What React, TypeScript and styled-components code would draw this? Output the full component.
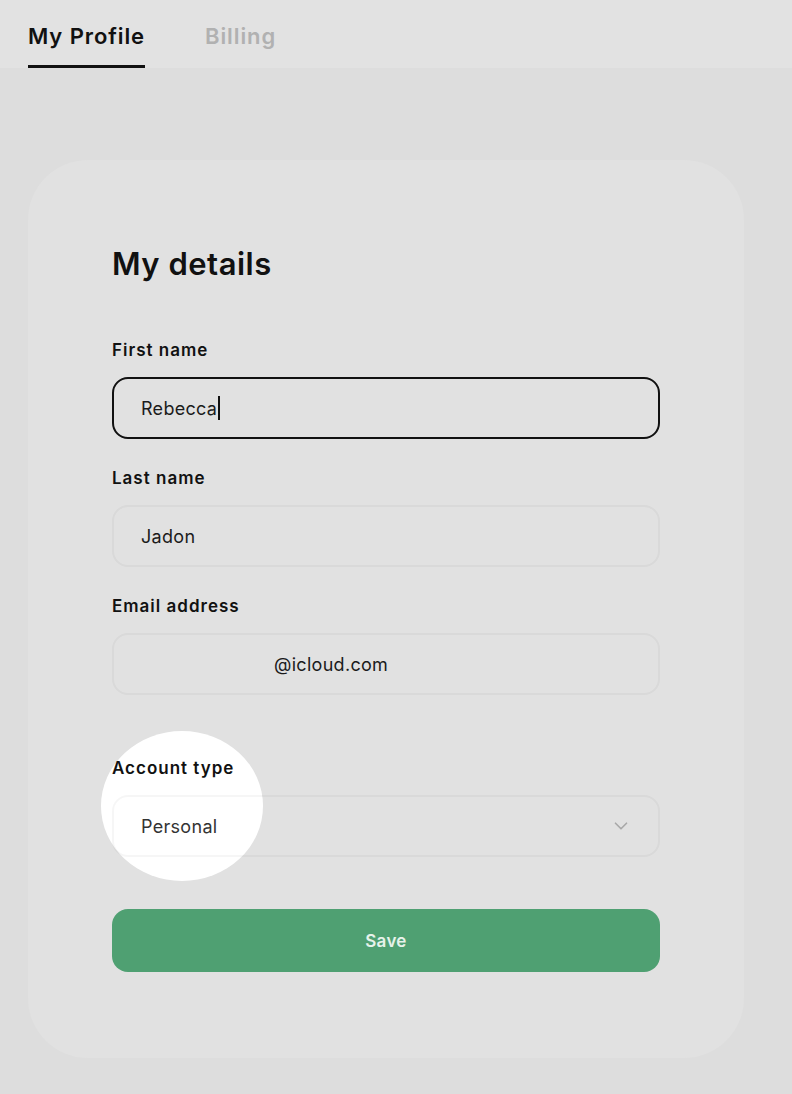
import React from "react";
import styled, { createGlobalStyle } from "styled-components";
import { ChevronDown } from "lucide-react";

const GlobalStyle = createGlobalStyle`
  body {
    margin: 0;
    background: #dddddd;
    font-family: "Inter", "Liberation Sans", sans-serif;
    color: #111;
  }
`;

const Page = styled.div`
  min-height: 1094px;
  background: #dddddd;
`;

const Tabs = styled.div`
  height: 68px;
  background: #e2e2e2;
  display: flex;
  align-items: stretch;
  gap: 60px;
  padding: 0 28px;
`;

const Tab = styled.div<{ $active?: boolean }>`
  display: flex;
  align-items: center;
  font-size: 22px;
  font-weight: 600;
  letter-spacing: 0.9px;
  color: ${(p) => (p.$active ? "#111" : "#b1b1b1")};
  border-bottom: 3px solid ${(p) => (p.$active ? "#111" : "transparent")};
  padding-top: 6px;
`;

const Card = styled.div`
  position: relative;
  margin: 92px 48px 0 28px;
  height: 898px;
  box-sizing: border-box;
  background: #e1e1e1;
  border-radius: 60px;
  padding: 86px 84px 0;
  display: flex;
  flex-direction: column;
`;

const Spotlight = styled.div`
  position: absolute;
  left: 73px;
  top: 571px;
  width: 162px;
  height: 150px;
  border-radius: 50%;
  background: #ffffff;
`;

const Title = styled.h1`
  margin: 0 0 56px;
  font-size: 31px;
  font-weight: 600;
  line-height: 36px;
  letter-spacing: 0.5px;
`;

const Field = styled.div<{ $gap?: number }>`
  position: relative;
  display: flex;
  flex-direction: column;
  gap: 15px;
  margin-bottom: ${(p) => p.$gap ?? 27}px;
`;

const Label = styled.label`
  font-size: 17px;
  font-weight: 600;
  line-height: 24px;
  letter-spacing: 1px;
`;

const Box = styled.div<{ $focused?: boolean }>`
  height: 62px;
  box-sizing: border-box;
  border-radius: 16px;
  border: 2px solid ${(p) => (p.$focused ? "#111" : "rgba(0, 0, 0, 0.035)")};
  display: flex;
  align-items: center;
  justify-content: space-between;
  padding: 0 26px 0 27px;
  font-size: 18px;
  letter-spacing: 0.3px;
  color: #1b1b1b;
`;

const Value = styled.span<{ $indent?: number }>`
  padding-left: ${(p) => p.$indent ?? 0}px;
  display: flex;
  align-items: center;
`;

const Caret = styled.span`
  display: inline-block;
  width: 2px;
  height: 24px;
  margin-left: 1px;
  background: #111;
`;

const SelectValue = styled(Value)`
  color: #333;
`;

const SaveButton = styled.button`
  height: 63px;
  border: none;
  border-radius: 16px;
  background: #4fa072;
  color: #e6f2ea;
  font-family: inherit;
  font-size: 17px;
  font-weight: 600;
  letter-spacing: 0.3px;
  cursor: pointer;
`;

export default function App() {
  return (
    <Page>
      <GlobalStyle />
      <Tabs>
        <Tab $active>My Profile</Tab>
        <Tab>Billing</Tab>
      </Tabs>
      <Card>
        <Spotlight />
        <Title>My details</Title>
        <Field>
          <Label>First name</Label>
          <Box $focused>
            <Value>
              Rebecca
              <Caret />
            </Value>
          </Box>
        </Field>
        <Field>
          <Label>Last name</Label>
          <Box>
            <Value>Jadon</Value>
          </Box>
        </Field>
        <Field $gap={61}>
          <Label>Email address</Label>
          <Box>
            <Value $indent={133}>@icloud.com</Value>
          </Box>
        </Field>
        <Field $gap={52}>
          <Label>Account type</Label>
          <Box>
            <SelectValue>Personal</SelectValue>
            <ChevronDown size={22} color="#a8a8a8" strokeWidth={1.8} />
          </Box>
        </Field>
        <SaveButton>Save</SaveButton>
      </Card>
    </Page>
  );
}
